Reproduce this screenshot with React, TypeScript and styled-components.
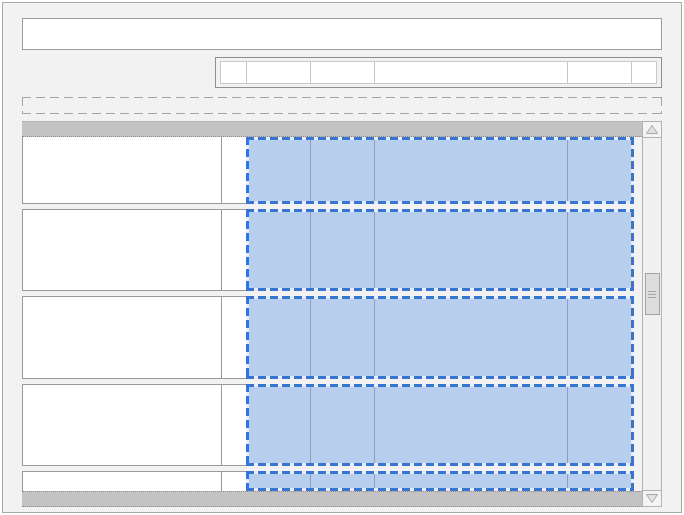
import React from "react";
import styled, { createGlobalStyle, css } from "styled-components";

const Global = createGlobalStyle`
  html, body { margin: 0; padding: 0; background: #ffffff; }
  body { font-family: "Liberation Sans", Arial, sans-serif; }
  * { box-sizing: border-box; }
`;

const dashed = (color: string, gap: string, w: number, dash: number, space: number, fill: string) => css`
  background:
    repeating-linear-gradient(90deg, ${color} 0 ${dash}px, ${gap} ${dash}px ${dash + space}px) top left / 100% ${w}px no-repeat,
    repeating-linear-gradient(90deg, ${color} 0 ${dash}px, ${gap} ${dash}px ${dash + space}px) bottom left / 100% ${w}px no-repeat,
    repeating-linear-gradient(180deg, ${color} 0 ${dash}px, ${gap} ${dash}px ${dash + space}px) top left / ${w}px 100% no-repeat,
    repeating-linear-gradient(180deg, ${color} 0 ${dash}px, ${gap} ${dash}px ${dash + space}px) top right / ${w}px 100% no-repeat,
    ${fill};
`;

const Frame = styled.div`
  margin: 2px;
  width: 680px;
  height: 511px;
  border: 1px solid #a9a9a9;
  background: #f2f2f2;
  padding: 15px 19px 0 19px;
  display: flex;
  flex-direction: column;
`;

const TopInput = styled.div`
  height: 32px;
  border: 1px solid #9c9c9c;
  background: #ffffff;
`;

const Toolbar = styled.div`
  align-self: flex-end;
  margin-top: 7px;
  width: 447px;
  height: 31px;
  border: 1px solid #8e8e8e;
  padding: 3px 4px;
  background: #f2f2f2;
`;

const ToolbarInner = styled.div`
  height: 100%;
  border: 1px solid #c8c8c8;
  background: #ffffff;
  display: flex;
`;

const ToolCell = styled.div<{ $w: number; $last?: boolean }>`
  width: ${(p) => p.$w}px;
  flex: ${(p) => (p.$last ? "1" : "none")};
  border-right: ${(p) => (p.$last ? "none" : "1px solid #c4c4c4")};
`;

const DashedBox = styled.div`
  margin-top: 9px;
  height: 17px;
  ${dashed("#a6a6a6", "transparent", 1, 9, 5, "transparent")}
`;

const Grid = styled.div`
  margin-top: 7px;
  height: 386px;
  display: flex;
`;

const Viewport = styled.div`
  width: 620px;
  display: flex;
  flex-direction: column;
`;

const Band = styled.div<{ $top?: boolean }>`
  height: 16px;
  flex: none;
  background: #c3c3c3;
  ${(p) =>
    p.$top
      ? "border-bottom: 1px dotted #8c8c8c; border-top: 1px dotted #b0b0b0;"
      : "border-top: 1px dotted #8c8c8c; border-bottom: 1px dotted #8c8c8c;"}
`;

const Body = styled.div`
  flex: 1;
  overflow: hidden;
  background: #f2f2f2;
  display: flex;
  flex-direction: column;
  gap: 5px;
`;

const Row = styled.div<{ $h: number }>`
  height: ${(p) => p.$h}px;
  flex: none;
  display: flex;
`;

const LeftCell = styled.div<{ $first?: boolean; $last?: boolean }>`
  width: 200px;
  background: #ffffff;
  border: 1px solid #9a9a9a;
  border-top: ${(p) => (p.$first ? "none" : "1px solid #9a9a9a")};
  border-bottom: ${(p) => (p.$last ? "none" : "1px solid #9a9a9a")};
`;

const MidCell = styled.div<{ $first?: boolean; $last?: boolean }>`
  width: 24px;
  background: #ffffff;
  border-bottom: ${(p) => (p.$last ? "none" : "1px solid #9a9a9a")};
  border-top: ${(p) => (p.$first ? "none" : "1px solid #9a9a9a")};
`;

const BlueBlock = styled.div`
  width: 388px;
  padding: 3px;
  display: flex;
  ${dashed("#3874d2", "#e6eefa", 3, 8, 4, "#b8ceee")}
`;

const BlueCol = styled.div<{ $w?: number }>`
  width: ${(p) => (p.$w ? `${p.$w}px` : "auto")};
  flex: ${(p) => (p.$w ? "none" : "1")};
  border-right: ${(p) => (p.$w ? "1px solid #8d9fbd" : "none")};
`;

const Tail = styled.div`
  width: 8px;
`;

const Scrollbar = styled.div`
  width: 20px;
  border: 1px solid #b3b3b3;
  background: #f0f0f0;
  display: flex;
  flex-direction: column;
`;

const ArrowBtn = styled.div<{ $down?: boolean }>`
  height: 16px;
  flex: none;
  display: flex;
  align-items: center;
  justify-content: center;
  background: #f4f4f4;
  ${(p) => (p.$down ? "border-top: 1px solid #b3b3b3;" : "border-bottom: 1px solid #b3b3b3;")}
`;

const Track = styled.div`
  flex: 1;
  display: flex;
  flex-direction: column;
  align-items: center;
`;

const Thumb = styled.div`
  margin-top: 135px;
  width: 15px;
  height: 42px;
  background: #dddddd;
  border: 1px solid #a2a2a2;
  display: flex;
  flex-direction: column;
  align-items: center;
  justify-content: center;
  gap: 2px;
`;

const Grip = styled.div`
  width: 8px;
  height: 1px;
  background: #a8a8a8;
`;

const Arrow = ({ down }: { down?: boolean }) => (
  <svg width="14" height="11" viewBox="0 0 14 11">
    <polygon
      points={down ? "1.5,1.5 12.5,1.5 7,9.5" : "1.5,9.5 12.5,9.5 7,1.5"}
      fill="#e2e2e2"
      stroke="#a6a6a6"
      strokeWidth="1"
    />
  </svg>
);

const rows = [67, 82, 83, 82, 20];

export default function App() {
  return (
    <>
      <Global />
      <Frame>
        <TopInput />
        <Toolbar>
          <ToolbarInner>
            <ToolCell $w={26} />
            <ToolCell $w={64} />
            <ToolCell $w={64} />
            <ToolCell $w={193} />
            <ToolCell $w={64} />
            <ToolCell $w={25} $last />
          </ToolbarInner>
        </Toolbar>
        <DashedBox />
        <Grid>
          <Viewport>
            <Band $top />
            <Body>
              {rows.map((h, i) => (
                <Row key={i} $h={h}>
                  <LeftCell $first={i === 0} $last={i === rows.length - 1} />
                  <MidCell $first={i === 0} $last={i === rows.length - 1} />
                  <BlueBlock>
                    <BlueCol $w={62} />
                    <BlueCol $w={64} />
                    <BlueCol $w={193} />
                    <BlueCol />
                  </BlueBlock>
                  <Tail />
                </Row>
              ))}
            </Body>
            <Band />
          </Viewport>
          <Scrollbar>
            <ArrowBtn>
              <Arrow />
            </ArrowBtn>
            <Track>
              <Thumb>
                <Grip />
                <Grip />
                <Grip />
              </Thumb>
            </Track>
            <ArrowBtn $down>
              <Arrow down />
            </ArrowBtn>
          </Scrollbar>
        </Grid>
      </Frame>
    </>
  );
}
